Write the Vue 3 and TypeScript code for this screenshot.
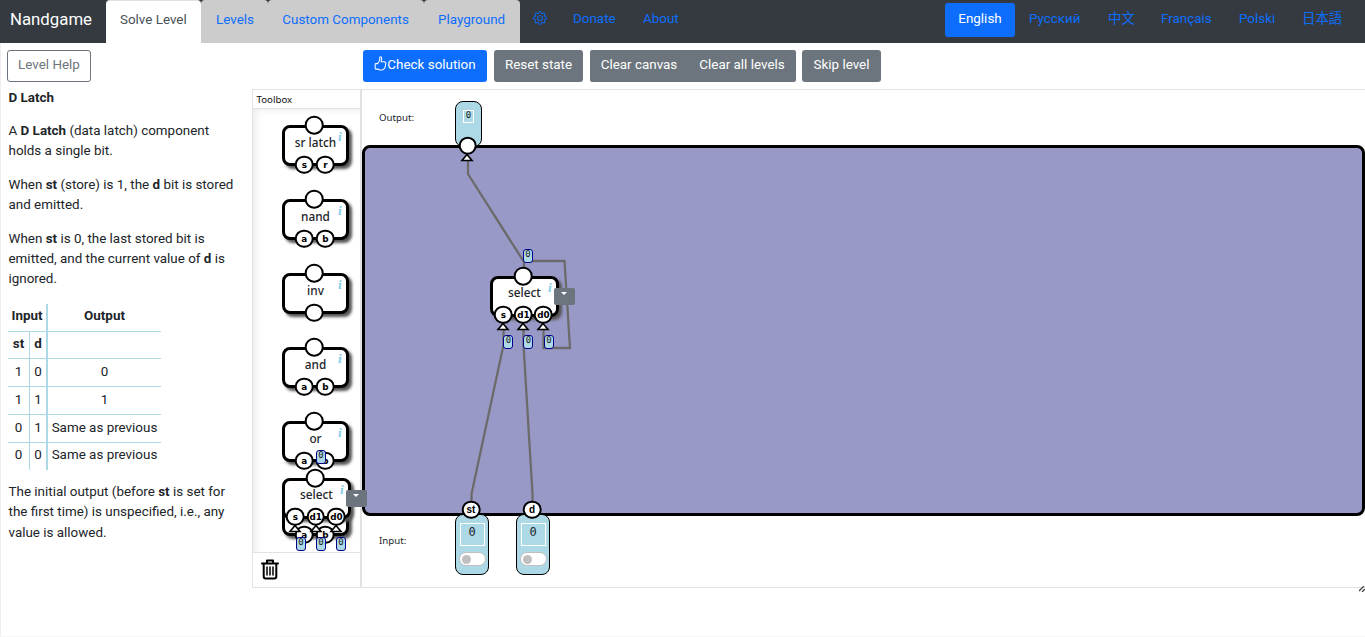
<script setup lang="ts">
interface Port { x: number; label: string }
interface Tool { name: string; ports: Port[] }
interface Gate { x: number; y: number; ports: Port[]; chips: { x: number; y: number }[] }

const tabs: string[] = ['Levels', 'Custom Components', 'Playground']
const languages: string[] = ['Русский', '中文', 'Français', 'Polski', '日本語']

const ab: Port[] = [{ x: 22.3, label: 'a' }, { x: 43.3, label: 'b' }]
const tools: Tool[] = [
  { name: 'sr latch', ports: [{ x: 22.3, label: 's' }, { x: 43.3, label: 'r' }] },
  { name: 'nand', ports: ab },
  { name: 'inv', ports: [{ x: 32.4, label: '' }] },
  { name: 'and', ports: ab },
  { name: 'or', ports: ab },
  { name: '', ports: ab },
]

const gates: Gate[] = [
  {
    x: 282, y: 478,
    ports: [{ x: 13.3, label: 's' }, { x: 33.6, label: 'd1' }, { x: 54.4, label: 'd0' }],
    chips: [{ x: 31, y: -31 }, { x: 11, y: 56 }, { x: 31, y: 56 }, { x: 51, y: 56 }],
  },
  {
    x: 490, y: 276,
    ports: [{ x: 13.3, label: 's' }, { x: 33.4, label: 'd1' }, { x: 53.4, label: 'd0' }],
    chips: [{ x: 30, y: -30 }, { x: 10.4, y: 56 }, { x: 30.4, y: 56 }, { x: 51, y: 56 }],
  },
]
const inputs = [{ x: 455, label: 'st' }, { x: 516, label: 'd' }]

const rows: string[][] = [
  ['1', '0', '0'],
  ['1', '1', '1'],
  ['0', '1', 'Same as previous'],
  ['0', '0', 'Same as previous'],
]
</script>

<template>
  <div class="page">
    <nav class="nav">
      <span class="brand">Nandgame</span>
      <a class="tab active">Solve Level</a>
      <a v-for="(t, i) in tabs" :key="t" :class="['tab', 'tab' + i]">{{ t }}</a>
      <a class="gear">
        <svg width="14" height="14" viewBox="0 0 16 16" fill="currentColor">
          <path d="M8 4.754a3.246 3.246 0 1 0 0 6.492 3.246 3.246 0 0 0 0-6.492zM5.754 8a2.246 2.246 0 1 1 4.492 0 2.246 2.246 0 0 1-4.492 0z" />
          <path d="M9.796 1.343c-.527-1.79-3.065-1.79-3.592 0l-.094.319a.873.873 0 0 1-1.255.52l-.292-.16c-1.64-.892-3.433.902-2.54 2.541l.159.292a.873.873 0 0 1-.52 1.255l-.319.094c-1.79.527-1.79 3.065 0 3.592l.319.094a.873.873 0 0 1 .52 1.255l-.16.292c-.892 1.64.901 3.434 2.541 2.54l.292-.159a.873.873 0 0 1 1.255.52l.094.319c.527 1.79 3.065 1.79 3.592 0l.094-.319a.873.873 0 0 1 1.255-.52l.292.16c1.64.893 3.434-.902 2.54-2.541l-.159-.292a.873.873 0 0 1 .52-1.255l.319-.094c1.79-.527 1.79-3.065 0-3.592l-.319-.094a.873.873 0 0 1-.52-1.255l.16-.292c.893-1.64-.902-3.433-2.541-2.54l-.292.159a.873.873 0 0 1-1.255-.52l-.094-.319zm-2.633.283c.246-.835 1.428-.835 1.674 0l.094.319a1.873 1.873 0 0 0 2.693 1.115l.291-.16c.764-.415 1.6.42 1.184 1.185l-.159.292a1.873 1.873 0 0 0 1.116 2.692l.318.094c.835.246.835 1.428 0 1.674l-.319.094a1.873 1.873 0 0 0-1.115 2.693l.16.291c.415.764-.42 1.6-1.185 1.184l-.291-.159a1.873 1.873 0 0 0-2.693 1.116l-.094.318c-.246.835-1.428.835-1.674 0l-.094-.319a1.873 1.873 0 0 0-2.692-1.115l-.292.16c-.764.415-1.6-.42-1.184-1.185l.159-.291A1.873 1.873 0 0 0 1.945 8.93l-.319-.094c-.835-.246-.835-1.428 0-1.674l.319-.094A1.873 1.873 0 0 0 3.06 4.377l-.16-.292c-.415-.764.42-1.6 1.185-1.184l.292.159a1.873 1.873 0 0 0 2.692-1.115l.094-.319z" />
        </svg>
      </a>
      <a class="link donate">Donate</a>
      <a class="link">About</a>
      <div class="langs">
        <a class="lang current">English</a>
        <a v-for="(l, i) in languages" :key="l" :class="['lang', 'lang' + i]">{{ l }}</a>
      </div>
    </nav>

    <div class="body">
      <aside class="help">
        <button class="btn outline">Level Help</button>
        <div class="prose">
          <h1>D Latch</h1>
          <p>A <b>D Latch</b> (data latch) component<br>holds a single bit.</p>
          <p>When <b>st</b> (store) is 1, the <b>d</b> bit is stored<br>and emitted.</p>
          <p>When <b>st</b> is 0, the last stored bit is<br>emitted, and the current value of <b>d</b> is<br>ignored.</p>
          <table>
            <colgroup><col class="c1"><col class="c2"><col></colgroup>
            <tbody>
              <tr><th colspan="2" class="thick">Input</th><th>Output</th></tr>
              <tr><th class="thin">st</th><th class="thick">d</th><th></th></tr>
              <tr v-for="(r, i) in rows" :key="i">
                <td class="thin">{{ r[0] }}</td><td class="thick">{{ r[1] }}</td><td>{{ r[2] }}</td>
              </tr>
            </tbody>
          </table>
          <p class="last">The initial output (before <b>st</b> is set for<br>the first time) is unspecified, i.e., any<br>value is allowed.</p>
        </div>
      </aside>

      <main class="work">
        <div class="actions">
          <button class="btn primary">
            <svg width="13" height="15" viewBox="0 0 13 15" fill="none" stroke="currentColor" stroke-width="1.05" stroke-linejoin="round">
              <path d="M1.8 7.6H3.7C4.6 6.4 5.5 5.2 5.7 3.8V1.8C5.7.4 7.6.5 7.7 2.3C7.8 3.6 7.5 4.7 7.1 5.8H10C11.9 5.8 12.1 7.4 11.5 8.6C11.8 9.6 11.6 10.2 11 10.9C11 11.9 10.8 12.3 10.1 12.7C9.8 13.6 9.2 13.9 8.2 13.9H5.8L3.9 13.1H1.8Q1.2 13.1 1.2 12.3V8.5Q1.2 7.6 1.8 7.6Z" />
            </svg><span>Check solution</span>
          </button>
          <button class="btn gray reset">Reset state</button>
          <div class="group">
            <button class="btn gray canvas-btn">Clear canvas</button><button class="btn gray levels-btn">Clear all levels</button>
          </div>
          <button class="btn gray skip">Skip level</button>
        </div>

        <div class="editor">
          <section class="toolbox">
            <header>Toolbox</header>
            <div class="tools">
              <div v-for="(t, i) in tools" :key="i" class="slot">
                <div class="gate small">
                  <span class="name">{{ t.name }}</span>
                  <i class="info">i</i>
                  <span class="port top"></span>
                  <span v-for="p in t.ports" :key="p.x" class="port bottom" :style="{ left: p.x + 'px' }">{{ p.label }}</span>
                </div>
              </div>
            </div>
            <footer>
              <svg width="18" height="21" viewBox="0 0 18 21" fill="none" stroke="#000" stroke-width="2" stroke-linecap="round" stroke-linejoin="round">
                <path d="M1 4.5H17M6 4V1.5H12V4M2.7 5V17.5Q2.7 19.5 4.7 19.5H13.3Q15.3 19.5 15.3 17.5V5" />
                <path d="M6 8V16M9 8V16M12 8V16" stroke-width="1.5" />
              </svg>
            </footer>
          </section>
          <section class="stage">
            <div class="terminal-row top-row">Output:</div>
            <div class="board"></div>
            <div class="terminal-row bottom-row">Input:</div>
          </section>
        </div>
      </main>
    </div>

    <div class="overlay">
      <div class="terminal out"><span class="value">0</span></div>
      <div v-for="n in inputs" :key="n.label" class="terminal in" :style="{ left: n.x + 'px' }">
        <span class="value">0</span><span class="switch"></span>
      </div>
      <svg class="wires" width="1365" height="637" fill="none" stroke="#6b6b6b" stroke-width="2.3">
        <path d="M468 158V174L524 262V270" />
        <path d="M524 261H564.5L570 348H543.5V328" />
        <path d="M503.5 328V345L471.5 494V502" />
        <path d="M523.5 328V345L532.5 494V502" />
      </svg>
      <div v-for="(g, i) in gates" :key="i" class="gate big" :style="{ left: g.x + 'px', top: g.y + 'px' }">
        <span class="name">select</span>
        <i class="info">i</i>
        <span class="port top"></span>
        <span v-for="p in g.ports" :key="p.label" class="port bottom" :style="{ left: p.x + 'px' }">{{ p.label }}</span>
        <svg v-for="p in g.ports" :key="'t' + p.label" class="arrow" :style="{ left: p.x + 'px' }" width="14" height="9" viewBox="0 0 14 9">
          <path d="M7 1.5L12 7.5H2Z" fill="#fff" stroke="#000" stroke-width="1.6" />
        </svg>
        <span v-for="(c, k) in g.chips" :key="k" class="chip" :style="{ left: c.x + 'px', top: c.y + 'px' }">0</span>
        <span class="menu"></span>
      </div>
      <span class="port out-port"></span>
      <svg class="arrow out-arrow" width="14" height="9" viewBox="0 0 14 9">
        <path d="M7 1.5L12 7.5H2Z" fill="#fff" stroke="#000" stroke-width="1.6" />
      </svg>
      <span v-for="n in inputs" :key="'p' + n.label" class="port in-port" :style="{ left: n.x + 16 + 'px' }">{{ n.label }}</span>
      <svg class="grip" width="6" height="6" viewBox="0 0 6 6" stroke="#444" stroke-width="1.3"><path d="M0 5L5 0M3 6L6 3" /></svg>
    </div>
  </div>
</template>

<style>
body { margin: 0; background: #fff; overflow: hidden; }
</style>

<style scoped>
* { box-sizing: border-box; }
.page { position: relative; width: 1365px; height: 637px; overflow: hidden; background: #fff; color: #212529; font: 13.42px/20px Roboto, "Noto Sans CJK SC", sans-serif; border-bottom: 1px solid #f7f7f7; }
.nav { display: flex; height: 43px; background: #343a40; color: #0d6efd; white-space: nowrap; }
.brand { width: 106px; padding: 9px 0 0 10px; font-size: 16.8px; color: #fff; }
.tab { height: 43px; padding: 10px 0 0 15px; background: #ccc; border-radius: 4px 4px 0 0; }
.tab.active { width: 95px; padding-left: 14px; background: #fff; color: #495057; border-top: 1px solid #dee2e6; padding-top: 9px; }
.tab0 { width: 67px; }
.tab1 { width: 156px; padding-left: 14.3px; }
.tab2 { width: 96px; padding-left: 14px; }
.gear { width: 53px; padding: 11px 0 0 13px; }
.gear svg { display: block; }
.link { padding-top: 9px; }
.donate { width: 70px; }
.langs { display: flex; margin-left: auto; padding-top: 3px; }
.lang { height: 34px; padding: 6px 0 0 14px; }
.lang.current { width: 70px; color: #fff; background: #0d6efd; border-radius: 3px; text-align: center; padding-left: 0; }
.lang0 { width: 79px; }
.lang1 { width: 53px; }
.lang2 { width: 78px; }
.lang3 { width: 63px; }
.lang4 { width: 77px; }
.body { display: flex; height: 593px; }
.help { width: 252px; border-left: 1px solid #eee; padding: 7px 0 0 6px; }
.btn { height: 32px; padding: 0 0 3px; border: 0; border-radius: 3px; font: inherit; white-space: nowrap; color: #fff; display: flex; align-items: center; justify-content: center; }
.outline { width: 84px; color: #6c757d; background: #fff; border: 1px solid #6c757d; }
.primary { width: 124px; background: #0d6efd; }
.primary svg { margin-top: -2px; }
.gray { background: #6c757d; }
.reset { width: 89px; margin-left: 7px; }
.group { display: flex; width: 206px; height: 32px; margin-left: 7px; background: #6c757d; border-radius: 3px; }
.canvas-btn { width: 98px; }
.levels-btn { width: 108px; }
.skip { width: 79px; margin-left: 6px; }
.prose { padding: 6px 0 0 1.5px; }
h1 { margin: 0 0 13px; font-size: 13.42px; line-height: 20px; font-weight: 700; }
p { margin: 0 0 13.8px; line-height: 20.1px; white-space: nowrap; }
b { font-weight: 700; }
table { width: 153px; margin: 15px 0 11.5px -.5px; border-collapse: separate; border-spacing: 0; text-align: center; table-layout: fixed; line-height: 20px; }
.c1 { width: 22px; }
.c2 { width: 18px; }
th, td { height: 28px; padding: 0 0 4px; border-bottom: 1px solid #add8e6; white-space: nowrap; }
td { padding-bottom: 2px; }
tr:nth-child(2) th { height: 27px; padding-bottom: 3px; }
tr:last-child td { height: 27px; border-bottom: 0; padding-bottom: 4px; }
.thin { border-right: 1px solid #add8e6; }
.thick { border-right: 2px solid #add8e6; }
.last { line-height: 20.5px; }
.work { flex: 1; min-width: 0; }
.actions { display: flex; height: 46px; padding: 7px 0 0 111px; }
.editor { display: flex; height: 499px; border: 1px solid #e2e2e2; border-right: 0; }
.toolbox { width: 109px; border-right: 2px solid #e2e2e2; display: flex; flex-direction: column; font-family: "Noto Sans", sans-serif; }
.toolbox header { height: 19px; padding-left: 3.5px; font-size: 9.7px; line-height: 19px; border-bottom: 1px solid #e2e2e2; color: #111; }
.tools { height: 443px; padding: 16px 0 0 29px; overflow: hidden; box-shadow: inset 6px 4px 8px -4px #e8e8e8; }
.slot { height: 74px; }
.toolbox footer { flex: 1; padding: 6px 0 0 8px; border-top: 1px solid #e2e2e2; }
.stage { flex: 1; display: flex; flex-direction: column; font: 9.7px/14px "Noto Sans", sans-serif; }
.terminal-row { padding-left: 17px; }
.top-row { height: 55px; padding-top: 21px; }
.board { height: 371px; border: 3px solid #000; border-radius: 8px; background: #9999c8; }
.bottom-row { padding-top: 18px; }
.overlay { position: absolute; inset: 0; }
.wires { position: absolute; left: 0; top: 0; }
.gate { position: relative; width: 67px; height: 41px; background: #fff; border: 3px solid #000; border-radius: 8px; box-shadow: 3px 3px 3px #555; }
.gate.big { position: absolute; width: 69px; }
.name { display: block; padding-top: 5px; text-align: center; font: 500 11.8px/18px "Noto Sans", sans-serif; white-space: nowrap; color: #212529; }
.big .name { padding-top: 4px; }
.info { position: absolute; right: 4px; top: 2px; color: #87cee8; font: italic bold 10.5px/14px "DejaVu Serif", serif; }
.port { position: absolute; width: 18.6px; height: 18.6px; border: 2px solid #000; border-radius: 50%; background: #fff; transform: translate(-50%, -50%); color: #000; font: bold 10px/14.6px "Liberation Sans", Arial, sans-serif; text-align: center; display: flex; justify-content: center; }
.gate .port { margin: -3px 0 0 -3px; font-family: "DejaVu Sans", sans-serif; font-size: 8.8px; }
.gate .port.top { left: 32.4px; top: .4px; }
.gate .port.bottom { top: 39.5px; }
.gate.big .port.top { left: 33.4px; }
.gate.big .port.bottom { top: 38.6px; }
.arrow { position: absolute; top: 43px; margin-left: -10px; }
.chip { position: absolute; width: 10px; height: 14px; border: 1.3px solid #00008b; border-radius: 3px; background: #add8e6; font: 9px/9px "DejaVu Sans Mono", monospace; text-align: center; color: #222; display: flex; justify-content: center; }
.menu { position: absolute; left: 61.4px; top: 9px; width: 21px; height: 17px; background: #6c757d; border-radius: 2px; }
.menu::after { content: ""; position: absolute; left: 7px; top: 4px; border: 3.5px solid transparent; border-top-color: #fff; border-bottom: 0; }
.terminal { position: absolute; border: 1.4px solid #000; background: #add8e6; display: flex; flex-direction: column; align-items: center; }
.value { border: 1px solid #fff; font-family: "DejaVu Sans Mono", monospace; text-align: center; color: #212529; }
.out { left: 455px; top: 101px; width: 27px; height: 46px; border-radius: 8px; padding-top: 8px; }
.out .value { width: 11px; height: 13px; font-size: 9px; line-height: 9px; }
.in { top: 514px; width: 34px; height: 61px; border-radius: 8px; padding-top: 8px; }
.in .value { width: 25px; height: 23px; font-size: 12px; line-height: 17px; }
.switch { position: relative; width: 27px; height: 14px; margin-top: 6px; border: 1px solid #bfbfbf; border-radius: 7px; background: #fff; }
.switch::before { content: ""; position: absolute; left: 2px; top: 1.5px; width: 9px; height: 9px; border-radius: 50%; background: #bfbfbf; }
.out-port { left: 467.6px; top: 145.5px; }
.in-port { top: 509.5px; }
.out-arrow { left: 470px; top: 153px; margin-left: -10px; }
.grip { position: absolute; right: 0; top: 586px; }
</style>
